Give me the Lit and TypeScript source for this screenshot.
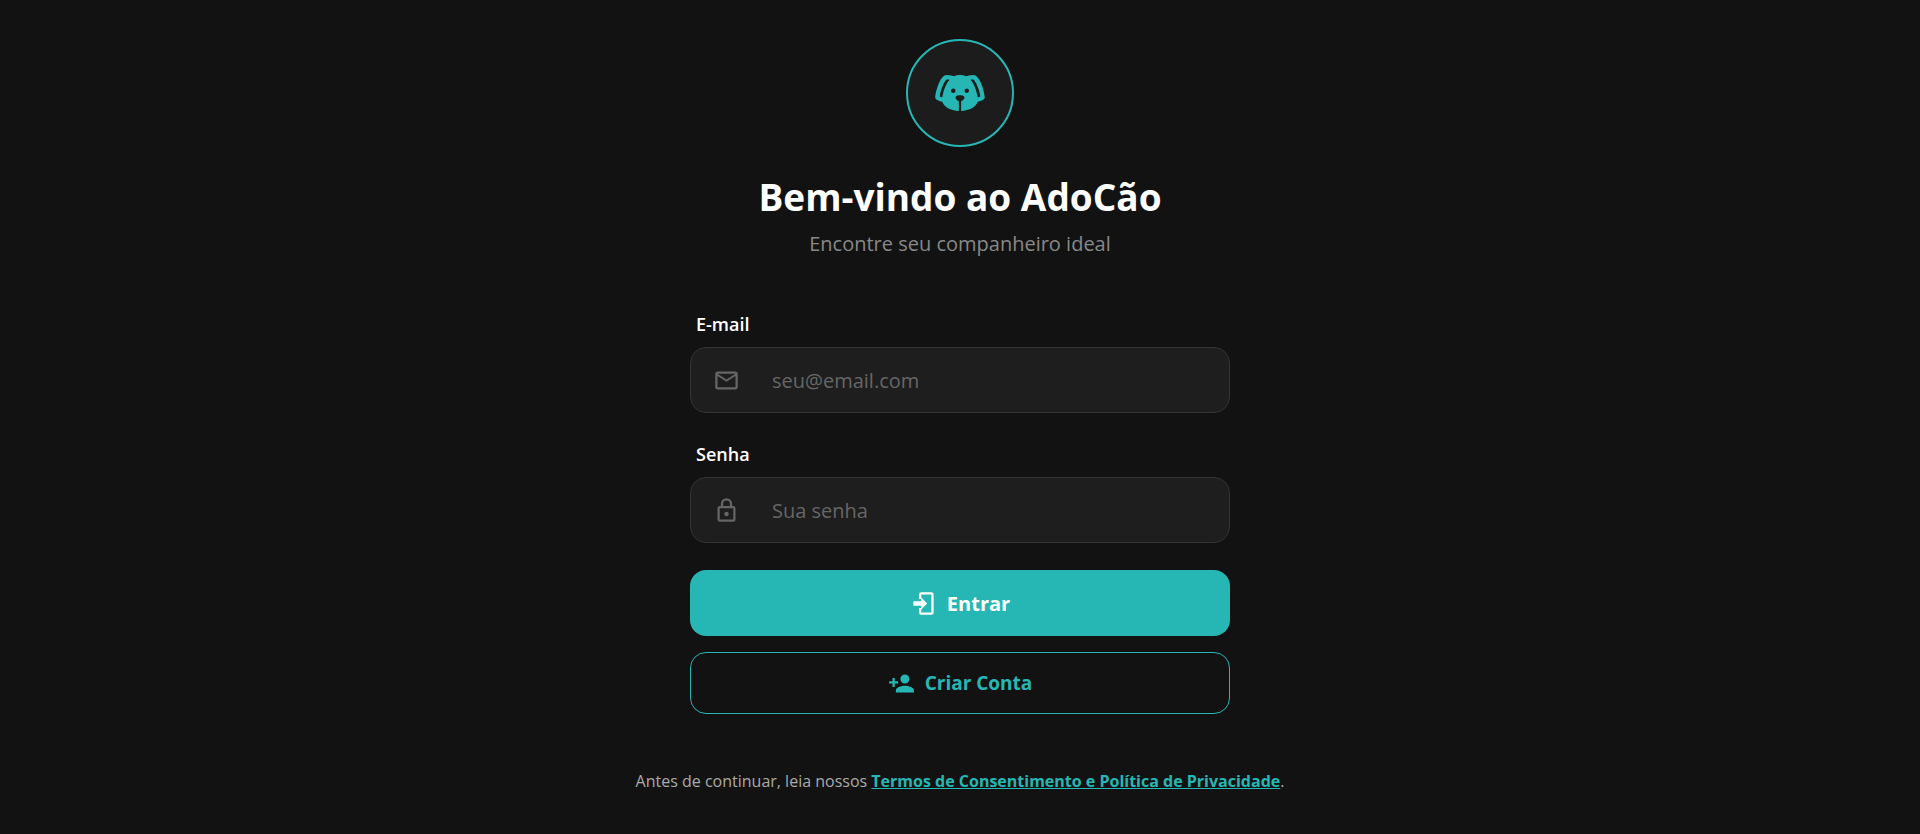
import { LitElement, html, css, svg } from "lit";
import { customElement, property } from "lit/decorators.js";

const ICONS: Record<string, string> = {
  dog: "M18,4C16.29,4 15.25,4.33 14.65,4.61C13.88,4.23 13,4 12,4C11,4 10.12,4.23 9.35,4.61C8.75,4.33 7.71,4 6,4C3,4 1,12 1,14C1,14.83 2.32,15.59 4.14,15.9C4.78,18.14 7.8,19.85 11.5,20V15.72C10.91,15.35 10,14.68 10,14C10,13 12,13 12,13C12,13 14,13 14,14C14,14.68 13.09,15.35 12.5,15.72V20C16.2,19.85 19.22,18.14 19.86,15.9C21.68,15.59 23,14.83 23,14C23,12 21,4 18,4M4.15,13.87C3.65,13.75 3.26,13.61 3,13.5C3.25,10.73 5.2,6.4 6.05,6C6.59,6 7,6.06 7.37,6.11C5.27,8.42 4.44,12.04 4.15,13.87M9,12A1,1 0 0,1 8,11C8,10.46 8.45,10 9,10A1,1 0 0,1 10,11C10,11.56 9.55,12 9,12M15,12A1,1 0 0,1 14,11C14,10.46 14.45,10 15,10A1,1 0 0,1 16,11C16,11.56 15.55,12 15,12M19.85,13.87C19.56,12.04 18.73,8.42 16.63,6.11C17,6.06 17.41,6 17.95,6C18.8,6.4 20.75,10.73 21,13.5C20.75,13.61 20.36,13.75 19.85,13.87Z",
  email: "M22 6C22 4.9 21.1 4 20 4H4C2.9 4 2 4.9 2 6V18C2 19.1 2.9 20 4 20H20C21.1 20 22 19.1 22 18V6M20 6L12 11L4 6H20M20 18H4V8L12 13L20 8V18Z",
  lock: "M12,17C10.89,17 10,16.1 10,15C10,13.89 10.89,13 12,13A2,2 0 0,1 14,15A2,2 0 0,1 12,17M18,20V10H6V20H18M18,8A2,2 0 0,1 20,10V20A2,2 0 0,1 18,22H6C4.89,22 4,21.1 4,20V10C4,8.89 4.89,8 6,8H7V6A5,5 0 0,1 12,1A5,5 0 0,1 17,6V8H18M12,3A3,3 0 0,0 9,6V8H15V6A3,3 0 0,0 12,3Z",
  login: "M10,17.25V14H3V10H10V6.75L15.25,12L10,17.25M10,2H19A2,2 0 0,1 21,4V20A2,2 0 0,1 19,22H10A2,2 0 0,1 8,20V16H10V20H19V4H10V8H8V4A2,2 0 0,1 10,2Z",
  accountPlus: "M15,14C12.33,14 7,15.33 7,18V20H23V18C23,15.33 17.67,14 15,14M6,10V7H4V10H1V12H4V15H6V12H9V10M15,12A4,4 0 0,0 19,8A4,4 0 0,0 15,4A4,4 0 0,0 11,8A4,4 0 0,0 15,12Z",
};

@customElement("app-icon")
export class AppIcon extends LitElement {
  static styles = css`
    :host { display: block; flex: none; width: 27px; height: 27px; }
    svg { display: block; width: 100%; height: 100%; fill: currentColor; }
  `;
  @property() name = "dog";
  render() {
    return html`<svg viewBox="0 0 24 24" aria-hidden="true">${svg`<path fill-rule="evenodd" d=${ICONS[this.name]}></path>`}</svg>`;
  }
}

@customElement("app-root")
export class AppRoot extends LitElement {
  static styles = css`
    :host {
      display: block;
      background: #121212;
      color: #fff;
      font-family: "Segoe UI", "Open Sans", "Noto Sans", sans-serif;
    }
    * { box-sizing: border-box; }
    .page {
      min-height: 100vh;
      padding: 39px 24px;
      display: flex;
      flex-direction: column;
      align-items: center;
    }
    .logo {
      display: grid;
      place-items: center;
      width: 108px;
      height: 108px;
      border: 2px solid #26b7b5;
      border-radius: 50%;
      background: #1c1c1c;
      color: #26b7b5;
    }
    .logo app-icon { width: 54px; height: 54px; }
    h1 {
      margin: 24px 0 0;
      font-size: 37px;
      line-height: 52px;
      font-weight: 700;
      text-align: center;
    }
    .subtitle {
      margin: 6px 0 0;
      font-size: 20px;
      line-height: 30px;
      color: #888;
      text-align: center;
    }
    form {
      width: 100%;
      max-width: 540px;
      margin-top: 51px;
      display: flex;
      flex-direction: column;
    }
    .field { margin-bottom: 27px; }
    .label {
      display: block;
      padding: 0 6px;
      margin-bottom: 9px;
      font-size: 18px;
      line-height: 28px;
      font-weight: 600;
    }
    .box {
      display: flex;
      align-items: center;
      gap: 32px;
      height: 66px;
      padding: 0 22px;
      border: 1px solid #333;
      border-radius: 16px;
      background: #1e1e1e;
      color: #666;
    }
    .box:focus-within { border-color: #26b7b5; }
    input {
      flex: 1;
      min-width: 0;
      height: 100%;
      padding: 0;
      border: 0;
      outline: 0;
      background: transparent;
      color: #fff;
      font: inherit;
      font-size: 20px;
    }
    input::placeholder { color: #666; opacity: 1; }
    button {
      display: flex;
      align-items: center;
      justify-content: center;
      gap: 10px;
      border-radius: 16px;
      font-family: inherit;
      font-weight: 700;
      cursor: pointer;
    }
    .primary {
      height: 66px;
      border: 0;
      background: #26b7b5;
      color: #fff;
      font-size: 20px;
    }
    .secondary {
      height: 62px;
      margin-top: 16px;
      border: 1px solid #26b7b5;
      background: transparent;
      color: #26b7b5;
      font-size: 19px;
    }
    .terms {
      margin: 54px 0 0;
      font-size: 16px;
      line-height: 26px;
      color: #aaa;
      text-align: center;
    }
    .terms a { color: #26b7b5; font-weight: 700; text-decoration: underline; }
  `;

  render() {
    return html`
      <main class="page">
        <div class="logo"><app-icon name="dog"></app-icon></div>
        <h1>Bem-vindo ao AdoCão</h1>
        <p class="subtitle">Encontre seu companheiro ideal</p>
        <form @submit=${(e: Event) => e.preventDefault()}>
          <div class="field">
            <label class="label" for="email">E-mail</label>
            <div class="box">
              <app-icon name="email"></app-icon>
              <input id="email" type="email" placeholder="seu@email.com" autocomplete="email" />
            </div>
          </div>
          <div class="field">
            <label class="label" for="senha">Senha</label>
            <div class="box">
              <app-icon name="lock"></app-icon>
              <input id="senha" type="password" placeholder="Sua senha" autocomplete="current-password" />
            </div>
          </div>
          <button class="primary" type="submit"><app-icon name="login"></app-icon>Entrar</button>
          <button class="secondary" type="button"><app-icon name="accountPlus"></app-icon>Criar Conta</button>
        </form>
        <p class="terms">
          Antes de continuar, leia nossos
          <a href="#termos">Termos de Consentimento e Política de Privacidade</a>.
        </p>
      </main>
    `;
  }
}
